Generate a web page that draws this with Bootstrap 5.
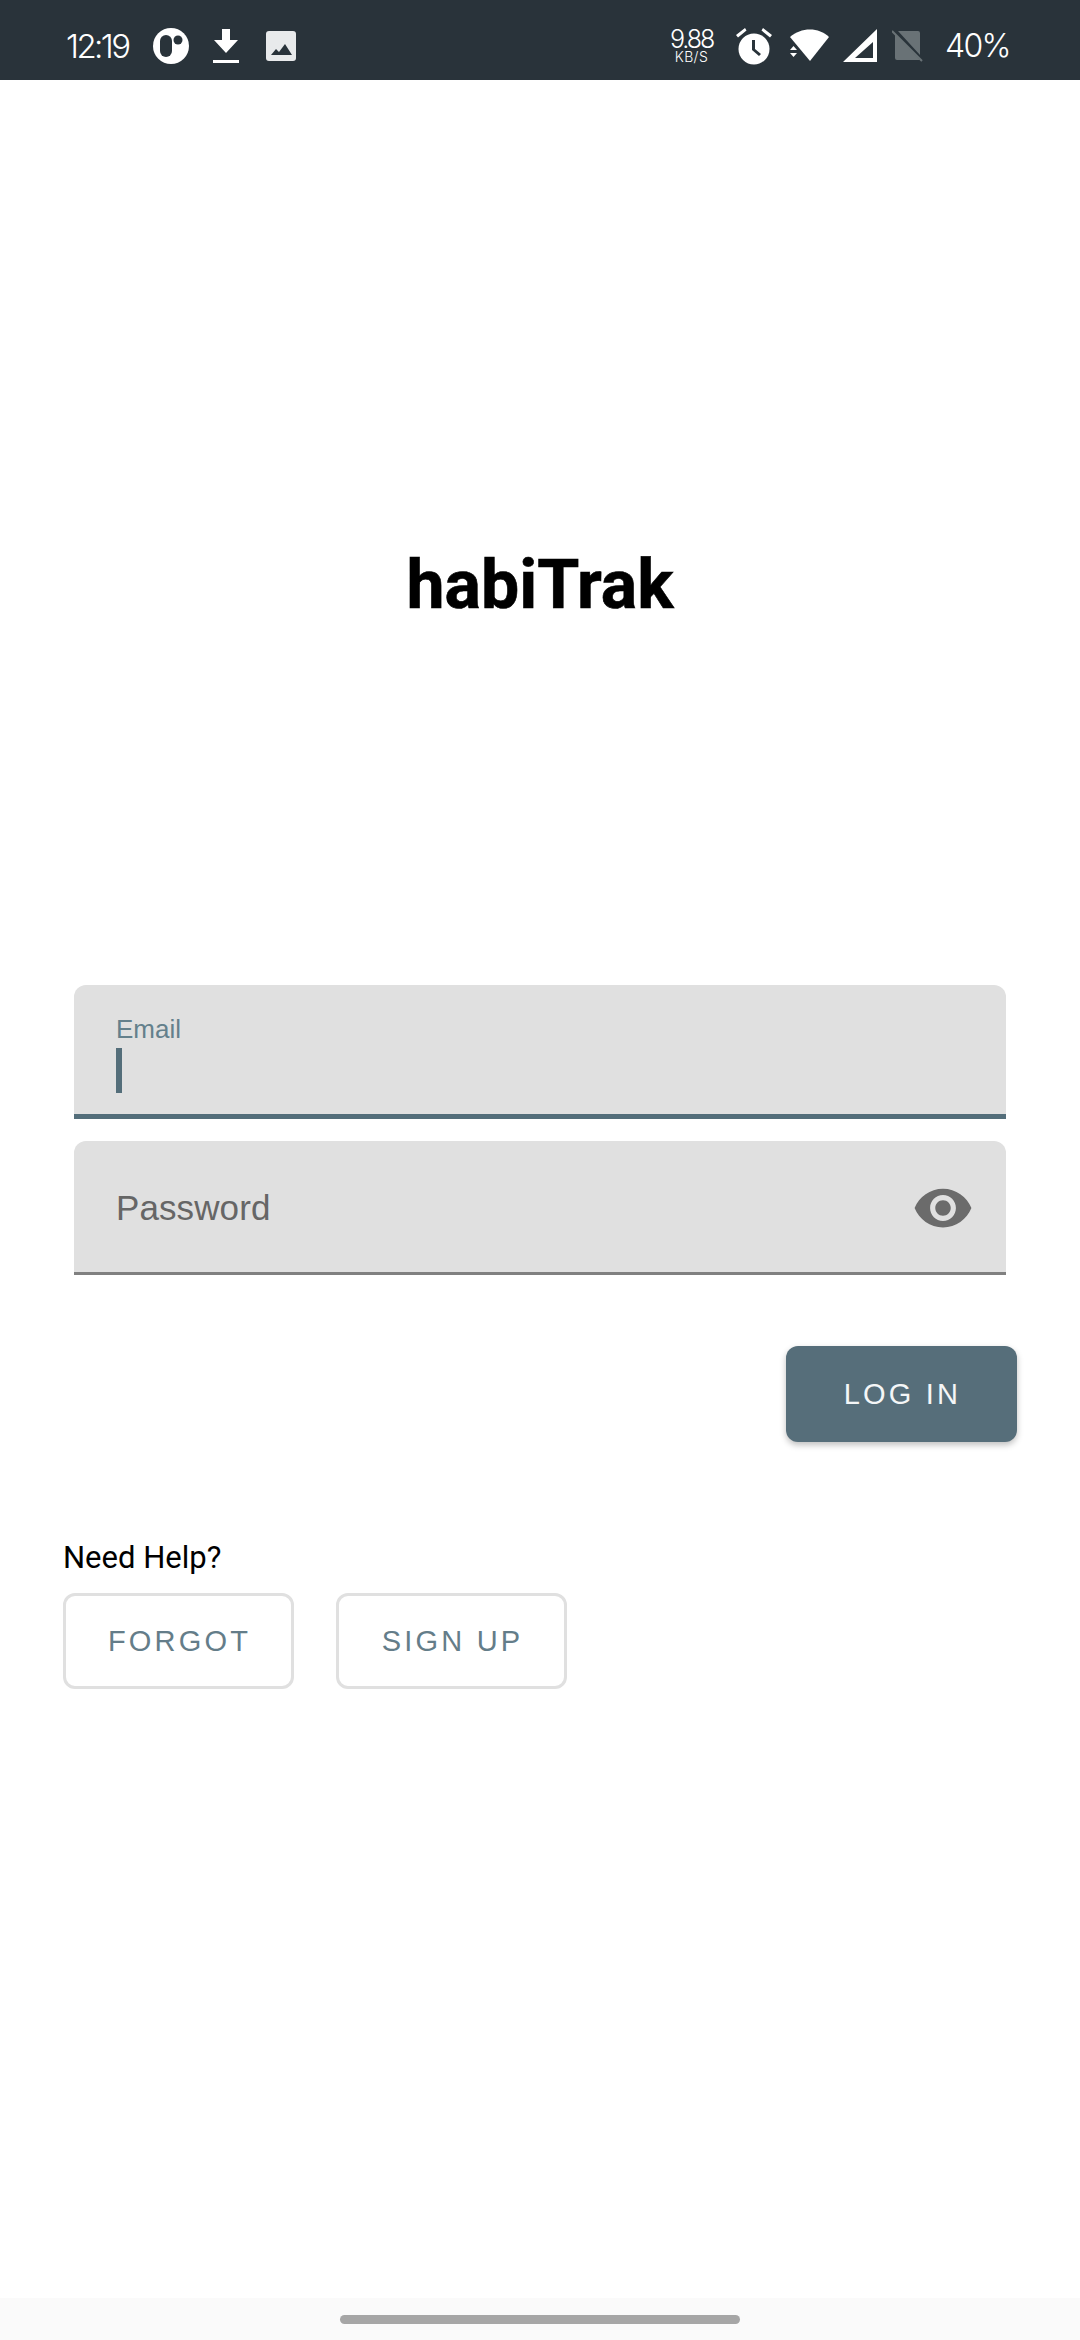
<!DOCTYPE html>
<html lang="en">
<head>
  <meta charset="UTF-8">
  <title>habiTrak</title>
  <link href="https://cdn.jsdelivr.net/npm/bootstrap@5.3.0/dist/css/bootstrap.min.css" rel="stylesheet">
  <style>
    html {
      overflow: hidden;
    }

    body {
      background-color: #fff;
      font-family: "Liberation Sans", Arial, sans-serif;
      height: 2340px;
    }

    .status-strip {
      background-color: #29333a;
      color: #fff;
      height: 80px;
      padding: 0 70px 0 66px;
    }

    .status-clock, .status-pct {
      font-family: Inter, sans-serif;
      font-weight: 300;
      font-size: 33px;
      line-height: 40px;
      margin-top: 12px;
    }

    .status-clock {
      letter-spacing: -2.6px;
      width: 62px;
      margin-right: 25px;
    }

    .status-pct {
      font-size: 32px;
      letter-spacing: -1.6px;
      margin-left: 21px;
    }

    .status-icon {
      flex: none;
      margin-top: 12px;
    }

    .net-speed {
      font-family: Inter, sans-serif;
      font-weight: 300;
      width: 43px;
      margin-top: 9px;
      text-align: center;
      white-space: nowrap;
    }

    .net-speed-num {
      font-size: 25px;
      letter-spacing: -2px;
      line-height: 24px;
    }

    .net-speed-unit {
      font-size: 14px;
      line-height: 12px;
      letter-spacing: 0.4px;
    }

    .app-main {
      padding: 0 63px;
    }

    .app-title {
      font-family: Roboto, sans-serif;
      font-weight: 700;
      font-size: 68px;
      line-height: 80px;
      margin: 465px 0 0;
      text-align: center;
      color: #000;
      -webkit-text-stroke: 0.6px #000;
    }

    .login-form {
      margin: 360px 11px 0 11px;
    }

    .field-box {
      background-color: #e0e0e0;
      border-radius: 12px 12px 0 0;
      height: 134px;
      padding: 0 32px 0 42px;
    }

    .field-email {
      border-bottom: 5px solid #546e7a;
      margin-bottom: 22px;
      padding-top: 28px;
    }

    .field-password {
      border-bottom: 3px solid #808080;
      padding-top: 3px;
    }

    .field-label {
      color: #64808c;
      font-size: 26px;
      line-height: 32px;
    }

    .text-caret {
      background-color: #546e7a;
      width: 6px;
      height: 45px;
      margin-top: 3px;
    }

    .field-placeholder {
      color: #666;
      font-size: 35px;
      letter-spacing: 0.1px;
    }

    .btn.btn-login, .btn.btn-line {
      font-family: "Liberation Sans", Arial, sans-serif;
      font-size: 29px;
      letter-spacing: 3.2px;
      height: 96px;
      width: 231px;
      border-radius: 12px;
      padding: 2px 0 0 2px;
    }

    .btn.btn-login {
      background-color: #566e7a;
      color: #f4f6f7;
      border: 0;
      margin: 71px -11px 0 0;
      box-shadow: 0 3px 6px rgba(0, 0, 0, 0.25);
    }

    .btn.btn-line {
      background-color: #fff;
      color: #647d89;
      border: 3px solid #e0e0e0;
    }

    .help-text {
      font-family: Roboto, sans-serif;
      font-size: 31px;
      line-height: 36px;
      color: #000;
      margin: 98px 0 17px;
    }

    .help-actions {
      gap: 42px;
    }

    .gesture-strip {
      background-color: #fafafa;
      height: 42px;
      padding-top: 17px;
    }

    .gesture-handle {
      background-color: #a6a6a6;
      width: 400px;
      height: 9px;
      border-radius: 5px;
    }
  </style>
</head>
<body class="d-flex flex-column">

<!-- Status bar -->
<div class="status-strip d-flex align-items-center">
  <span class="status-clock">12:19</span>
  <svg width="36" height="36" viewBox="0 0 36 36" class="status-icon" style="margin-right:24px">
    <circle cx="18" cy="18" r="18" fill="#fff"/>
    <rect x="7" y="7" width="12" height="22" rx="6" fill="#29333a"/>
    <circle cx="25" cy="12" r="4.500" fill="#29333a"/>
  </svg>
  <svg width="26" height="34" viewBox="0 0 26 34" class="status-icon" style="margin-right:27px">
    <path d="M9 0h8v11h8L13 24 1 11h8z" fill="#fff"/>
    <rect y="31" width="26" height="3" fill="#fff"/>
  </svg>
  <svg width="30" height="30" viewBox="0 0 30 30" class="status-icon">
    <rect width="30" height="30" rx="3" fill="#e8eaeb"/>
    <path d="M5 24l5-6 3 3 6-8 7 11z" fill="#29333a"/>
  </svg>
  <div class="flex-grow-1"></div>
  <div class="net-speed">
    <div class="net-speed-num">9.88</div>
    <div class="net-speed-unit">KB/S</div>
  </div>
  <svg width="38" height="38" viewBox="0 0 38 38" class="status-icon" style="margin-left:22px">
    <circle cx="19" cy="22" r="15.500" fill="#fff"/>
    <path d="M17 13h3v9l6 5-2 2-7-6z" fill="#29333a"/>
    <path d="M1 8l9-7 1.500 2.500-8.500 7zM37 8l-9-7-1.500 2.500 8.500 7z" fill="#fff"/>
  </svg>
  <svg width="40" height="34" viewBox="0 0 40 34" class="status-icon" style="margin-left:17px">
    <path d="M0 8C11-2 29-2 39 8L20 32z" fill="#fff"/>
    <path d="M0 21h7l-3.500-4zM0 24h7l-3.500 4z" fill="#fff"/>
  </svg>
  <svg width="36" height="34" viewBox="0 0 36 34" class="status-icon" style="margin-left:12px">
    <path d="M35 0v33H1zM31 13L13 29h18z" fill="#fff" fill-rule="evenodd"/>
  </svg>
  <svg width="32" height="32" viewBox="0 0 32 32" class="status-icon" style="margin-left:14px">
    <path d="M6 1h20a2 2 0 0 1 2 2v22zM3 4l25 26H5a2 2 0 0 1-2-2z" fill="#697276"/>
    <path d="M0 1l30 30" stroke="#697276" stroke-width="2"/>
  </svg>
  <span class="status-pct">40%</span>
</div>

<!-- Main -->
<main class="app-main flex-grow-1">
  <h1 class="app-title">habiTrak</h1>

  <form class="login-form d-flex flex-column">
    <div class="field-box field-email">
      <div class="field-label">Email</div>
      <div class="text-caret"></div>
    </div>
    <div class="field-box field-password d-flex align-items-center justify-content-between">
      <span class="field-placeholder">Password</span>
      <svg width="62" height="62" viewBox="0 0 24 24">
        <path fill="#6b6b6b" d="M12 4.500C7 4.500 2.730 7.610 1 12c1.730 4.390 6 7.500 11 7.500s9.270-3.110 11-7.500c-1.730-4.390-6-7.500-11-7.500zM12 17c-2.760 0-5-2.240-5-5s2.240-5 5-5 5 2.240 5 5-2.240 5-5 5zm0-8c-1.660 0-3 1.340-3 3s1.340 3 3 3 3-1.340 3-3-1.340-3-3-3z"/>
      </svg>
    </div>
    <div class="d-flex justify-content-end">
      <button type="button" class="btn btn-login">LOG IN</button>
    </div>
  </form>

  <p class="help-text">Need Help?</p>
  <div class="help-actions d-flex">
    <button type="button" class="btn btn-line">FORGOT</button>
    <button type="button" class="btn btn-line">SIGN UP</button>
  </div>
</main>

<!-- Gesture bar -->
<div class="gesture-strip d-flex justify-content-center">
  <div class="gesture-handle"></div>
</div>

<script src="https://cdn.jsdelivr.net/npm/bootstrap@5.3.0/dist/js/bootstrap.bundle.min.js"></script>
</body>
</html>
